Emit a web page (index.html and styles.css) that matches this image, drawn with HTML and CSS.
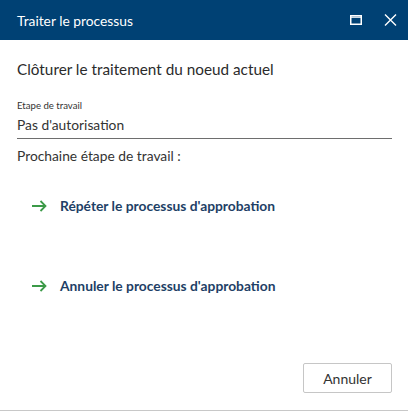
FILE: index.html
```html
<!DOCTYPE html>
<html lang="fr">
<head>
<meta charset="utf-8">
<link rel="stylesheet" href="styles.css">
</head>
<body>
<div class="dialog">
  <div class="titlebar">
    <span class="title">Traiter le processus</span>
    <div class="controls">
      <svg class="ico" width="12" height="10" viewBox="0 0 12 10"><rect x="0.75" y="0.75" width="10.5" height="8.5" fill="none" stroke="#fff" stroke-width="1.5"/><line x1="0" y1="2.2" x2="12" y2="2.2" stroke="#fff" stroke-width="1.2"/></svg>
      <svg class="ico" width="13" height="12" viewBox="0 0 13 12"><path d="M1 0.5 L12 11.5 M12 0.5 L1 11.5" stroke="#fff" stroke-width="1.4" fill="none"/></svg>
    </div>
  </div>
  <div class="content">
    <h1 class="heading">Clôturer le traitement du noeud actuel</h1>
    <div class="field">
      <label class="field-label">Etape de travail</label>
      <div class="field-value">Pas d'autorisation</div>
    </div>
    <div class="next">Prochaine étape de travail :</div>
    <div class="actions">
      <a class="action">
        <svg width="15" height="12" viewBox="0 0 15 12"><path d="M0 6 H13.5 M8.5 1 L13.5 6 L8.5 11" stroke="#3c9a48" stroke-width="1.8" fill="none"/></svg>
        <span>Répéter le processus d'approbation</span>
      </a>
      <a class="action">
        <svg width="15" height="12" viewBox="0 0 15 12"><path d="M0 6 H13.5 M8.5 1 L13.5 6 L8.5 11" stroke="#3c9a48" stroke-width="1.8" fill="none"/></svg>
        <span>Annuler le processus d'approbation</span>
      </a>
    </div>
  </div>
  <div class="footer">
    <button class="btn">Annuler</button>
  </div>
</div>
</body>
</html>
```
FILE: styles.css
```css
* { box-sizing: border-box; }
html, body { margin: 0; padding: 0; background: #fff; }
body { font-family: Lato, "Liberation Sans", sans-serif; color: #333; }
.dialog {
  width: 408px;
  height: 411px;
  display: flex;
  flex-direction: column;
  border-bottom: 1px solid #c8c8c8;
}
.titlebar {
  height: 40px;
  background: #004174;
  color: #fff;
  display: flex;
  align-items: center;
  justify-content: space-between;
  padding: 0 11px 0 17px;
}
.title { font-size: 13.8px; }
.controls { display: flex; align-items: center; gap: 22px; }
.ico { display: block; }
.content {
  flex: 1;
  padding: 0 16px 0 17px;
  display: flex;
  flex-direction: column;
}
.heading {
  margin: 19px 0 0;
  font-size: 15.3px;
  font-weight: 400;
  line-height: 20px;
  color: #2b2b2b;
}
.field {
  margin-top: 21px;
  border-bottom: 1px solid #6e6e6e;
  padding-bottom: 4px;
}
.field-label { display: block; font-size: 9.6px; line-height: 12px; color: #333; }
.field-value { font-size: 13.8px; line-height: 18px; margin-top: 4px; color: #333; }
.next { margin-top: 8px; font-size: 13.8px; line-height: 18px; color: #333; }
.actions {
  display: flex;
  flex-direction: column;
  gap: 62px;
  margin-top: 32px;
  padding-left: 15px;
}
.action {
  display: flex;
  align-items: center;
  gap: 13px;
  font-size: 13.8px;
  line-height: 18px;
  font-weight: 700;
  color: #1e3f66;
}
.footer {
  display: flex;
  justify-content: flex-end;
  padding: 0 16px 17px;
}
.btn {
  width: 89px;
  height: 30px;
  background: #fff;
  border: 1px solid #c6c6c6;
  border-radius: 2px;
  font-family: Lato, "Liberation Sans", sans-serif;
  font-size: 14px;
  color: #333;
}
```
